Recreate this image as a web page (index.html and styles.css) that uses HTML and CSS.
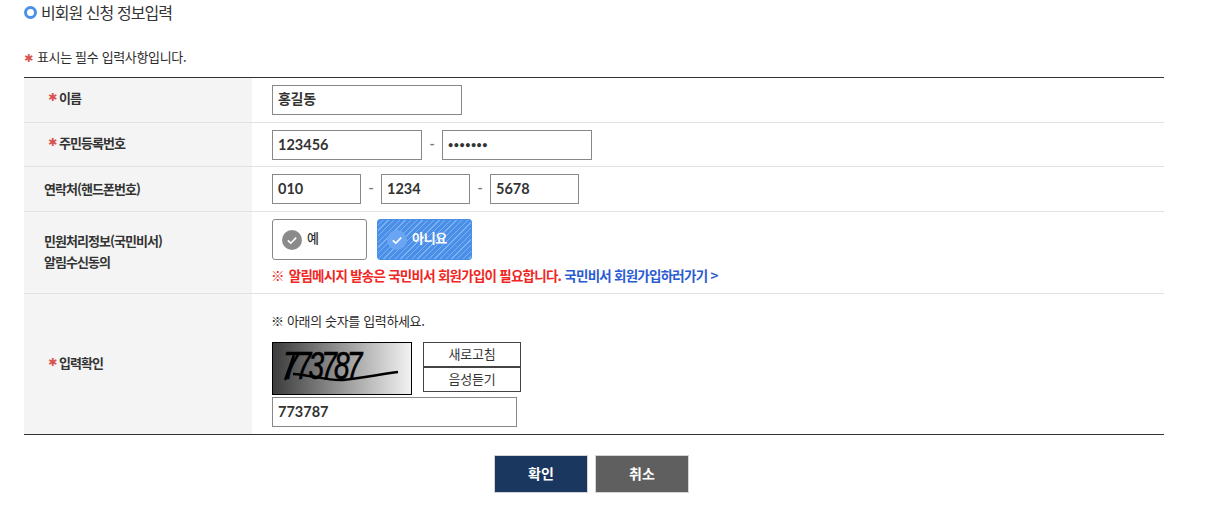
FILE: index.html
```
<!DOCTYPE html>
<html lang="ko">
<head>
<meta charset="utf-8">
<title>비회원 신청 정보입력</title>
<link rel="stylesheet" href="styles.css">
</head>
<body>
<div class="page">
  <h2 class="title"><span class="ring"></span>비회원 신청 정보입력</h2>
  <p class="note"><span class="star">✱</span>표시는 필수 입력사항입니다.</p>
  <div class="form">
    <div class="row row-name">
      <div class="label"><span class="star">✱</span>이름</div>
      <div class="cell"><div class="input w190">홍길동</div></div>
    </div>
    <div class="row row-id">
      <div class="label"><span class="star">✱</span>주민등록번호</div>
      <div class="cell inline">
        <div class="input w150">123456</div><span class="dash">-</span><div class="input w150 dots">•••••••</div>
      </div>
    </div>
    <div class="row row-phone">
      <div class="label">연락처(핸드폰번호)</div>
      <div class="cell inline">
        <div class="input w89">010</div><span class="dash">-</span><div class="input w89">1234</div><span class="dash">-</span><div class="input w89">5678</div>
      </div>
    </div>
    <div class="row row-agree">
      <div class="label multi">민원처리정보(국민비서)<br>알림수신동의</div>
      <div class="cell agree">
        <div class="choices">
          <div class="choice">
            <svg class="check" width="20" height="20" viewBox="0 0 20 20"><circle cx="10" cy="10" r="10" fill="#8a8a8a"/><path d="M5.8 10.3l3 2.9 5.4-5.6" fill="none" stroke="#fff" stroke-width="1.6"/></svg>
            <span>예</span>
          </div>
          <div class="choice on">
            <svg class="check" width="20" height="20" viewBox="0 0 20 20"><circle cx="10" cy="10" r="10" fill="#6aa5f3"/><path d="M5.8 10.3l3 2.9 5.4-5.6" fill="none" stroke="#fff" stroke-width="1.6"/></svg>
            <span>아니요</span>
          </div>
        </div>
        <p class="alert"><span class="red"><span class="ref-mark">※</span>알림메시지 발송은 국민비서 회원가입이 필요합니다.</span> <a class="blue">국민비서 회원가입하러가기 &gt;</a></p>
      </div>
    </div>
    <div class="row row-captcha">
      <div class="label"><span class="star">✱</span>입력확인</div>
      <div class="cell captcha">
        <p class="hint">※ 아래의 숫자를 입력하세요.</p>
        <div class="cap-row">
          <div class="cap-img">
            <span class="cap-text">773787</span>
            <svg class="cap-line" width="138" height="51" viewBox="0 0 138 51"><path d="M12 37 L21 12 M20 31 C38 32 55 38 70 37 C90 35 108 31 125 29" fill="none" stroke="#000" stroke-width="2.4"/></svg>
          </div>
          <div class="cap-btns">
            <div class="cap-btn">새로고침</div>
            <div class="cap-btn">음성듣기</div>
          </div>
        </div>
        <div class="input w245 cap-input">773787</div>
      </div>
    </div>
  </div>
  <div class="actions">
    <div class="btn navy">확인</div>
    <div class="btn gray">취소</div>
  </div>
</div>
</body>
</html>
```
FILE: styles.css
```
* { box-sizing: border-box; }
html, body { margin: 0; padding: 0; background: #fff; }
body {
  font-family: "Noto Sans CJK KR", "Noto Sans", sans-serif;
  color: #333;
  font-size: 13px;
  height: 531px;
  overflow: hidden;
}
p, h2 { margin: 0; }
.page { width: 1140px; margin-left: 24px; }
.title {
  display: flex;
  align-items: center;
  height: 24px;
  font-size: 16px;
  font-weight: 400;
  letter-spacing: -0.95px;
  color: #333;
}
.ring {
  width: 13px;
  height: 13px;
  border: 3.5px solid #4a90e8;
  border-radius: 50%;
  margin-right: 4px;
  margin-top: 1px;
}
.note {
  margin-top: 23px;
  height: 20px;
  line-height: 20px;
  font-size: 13px;
  letter-spacing: -0.35px;
  margin-bottom: 10px;
  color: #2b2b2b;
}
.star {
  display: inline-block;
  width: 11px;
  font-family: "DejaVu Sans", sans-serif;
  font-size: 11px;
  letter-spacing: 0;
  font-weight: 400;
  color: #d9534f;
}
.note .star { width: 13px; }
.form { border-top: 1px solid #333; border-bottom: 1px solid #333; }
.row { display: flex; border-bottom: 1px solid #e2e2e2; }
.row:last-child { border-bottom: 0; }
.row-name { height: 45px; }
.row-id { height: 44px; }
.row-phone { height: 45px; }
.row-agree { height: 82px; }
.row-captcha { height: 140px; }
.label {
  width: 228px;
  flex: none;
  background: #f4f4f4;
  display: flex;
  align-items: center;
  justify-content: flex-start;
  padding-left: 24px;
  padding-bottom: 4px;
  font-size: 13px;
  font-weight: 700;
  letter-spacing: -0.95px;
  color: #333;
  white-space: pre;
}
.row-name .label { padding-bottom: 6px; }
.row-phone .label { padding-bottom: 2px; }
.row-agree .label, .row-phone .label { padding-left: 20px; }
.label.multi { line-height: 21px; display: block; padding-top: 18px; }
.cell { flex: 1; padding: 7px 20px 0; }
.inline { display: flex; align-items: flex-start; }
.input {
  height: 30px;
  border: 1px solid #888;
  background: #fff;
  padding-left: 5px;
  font-family: Lato, "Noto Sans CJK KR", sans-serif;
  font-weight: 700;
  font-size: 14.5px;
  line-height: 27px;
  color: #333;
}
.row-name .input { font-family: "Noto Sans CJK KR", sans-serif; font-size: 14px; letter-spacing: -0.3px; line-height: 25px; }
.w190 { width: 190px; }
.w150 { width: 150px; }
.w89 { width: 89px; }
.w245 { width: 245px; }
.dots { letter-spacing: 0.5px; font-size: 9px; line-height: 28px; }
.dash { width: 20px; text-align: center; color: #777; font-size: 14px; line-height: 28px; font-family: Lato, sans-serif; font-weight: 700; }
.agree { padding-top: 7px; }
.choices { display: flex; gap: 10px; }
.choice {
  width: 95px;
  height: 41px;
  border: 1px solid #888;
  border-radius: 3px;
  display: flex;
  align-items: center;
  padding-left: 9px;
  gap: 5px;
  font-size: 13px;
  font-weight: 500;
  color: #333;
  background: #fff;
}
.choice span { margin-top: -5px; }
.choice.on {
  border-color: #4a8fe8;
  color: #fff;
  font-weight: 700;
  background: repeating-linear-gradient(135deg, #4a8fe8 0, #4a8fe8 3px, #7fb0f0 3px, #7fb0f0 4px);
  letter-spacing: -0.3px;
}
.alert {
  margin-top: 5px;
  margin-left: -1px;
  font-size: 13.5px;
  font-weight: 700;
  letter-spacing: -0.75px;
  line-height: 20px;
  white-space: nowrap;
}
.ref-mark { margin-right: 5px; }
.red { color: #f0261f; }
.blue { color: #2a5bd0; }
.captcha { padding-top: 17px; }
.hint { font-size: 13px; letter-spacing: -0.35px; line-height: 20px; color: #2b2b2b; margin-left: -1px; }
.cap-row { display: flex; margin-top: 11px; align-items: flex-start; }
.cap-img {
  position: relative;
  width: 140px;
  height: 53px;
  border: 1px solid #000;
  background: linear-gradient(90deg, #3c3c3c 0%, #f2f2f2 100%);
  overflow: hidden;
}
.cap-text {
  position: absolute;
  left: 10px;
  top: 3px;
  font-family: "Liberation Sans", sans-serif;
  font-size: 39px;
  font-style: italic;
  line-height: 40px;
  letter-spacing: -4px;
  color: #000;
  transform: scaleX(0.72);
  transform-origin: left center;
  -webkit-text-stroke: 0.6px #000;
}
.cap-line { position: absolute; left: 0; top: 0; }
.cap-btns { margin-left: 11px; display: flex; flex-direction: column; }
.cap-btn {
  width: 98px;
  height: 25px;
  border: 1px solid #444;
  text-align: center;
  font-size: 13px;
  line-height: 22px;
  letter-spacing: -0.2px;
  color: #333;
}
.cap-input { margin-top: 2px; }
.actions { display: flex; justify-content: center; gap: 7px; margin-top: 20px; padding-right: 5px; }
.btn {
  width: 94px;
  height: 38px;
  border: 1px solid #d4d4d4;
  color: #fff;
  font-size: 14px;
  font-weight: 700;
  text-align: center;
  line-height: 34px;
}
.navy { background: #1a3760; }
.gray { background: #5f5f5f; }
```
